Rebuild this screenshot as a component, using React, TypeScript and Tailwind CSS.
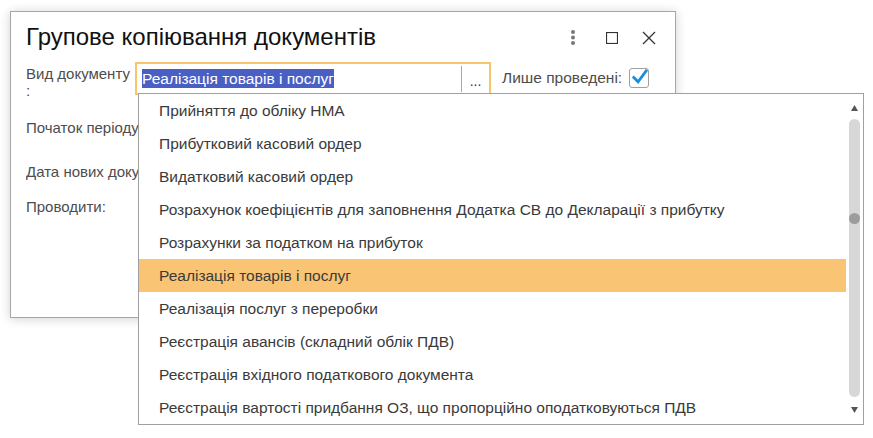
import React from "react";

const items = [
  "Прийняття до обліку НМА",
  "Прибутковий касовий ордер",
  "Видатковий касовий ордер",
  "Розрахунок коефіцієнтів для заповнення Додатка СВ до Декларації з прибутку",
  "Розрахунки за податком на прибуток",
  "Реалізація товарів і послуг",
  "Реалізація послуг з переробки",
  "Реєстрація авансів (складний облік ПДВ)",
  "Реєстрація вхідного податкового документа",
  "Реєстрація вартості придбання ОЗ, що пропорційно оподатковуються ПДВ",
];

export default function App() {
  return (
    <div
      className="relative w-[873px] h-[438px] bg-white overflow-hidden"
      style={{ fontFamily: '"Liberation Sans", Arial, sans-serif' }}
    >
      <div className="absolute left-0 top-0 w-[873px] h-[438px]">
        <div className="ml-[10px] mt-[11px] w-[666px] h-[307px] border border-[#a6a6a6] bg-white shadow-[0_1px_10px_rgba(0,0,0,0.18)] flex flex-col">
          <div className="flex items-start pt-[11px] pl-[15px] pr-[19px]">
            <div className="text-[24px] leading-[28px] text-[#111] flex-1">
              Групове копіювання документів
            </div>
            <div className="flex items-center pt-[7px]">
              <svg width="6" height="15" viewBox="0 0 6 15">
                <circle cx="3" cy="2" r="2" fill="#777" />
                <circle cx="3" cy="7.5" r="2" fill="#777" />
                <circle cx="3" cy="13" r="2" fill="#777" />
              </svg>
              <svg width="12" height="12" viewBox="0 0 12 12" className="ml-[30px]">
                <rect x="0.5" y="0.5" width="11" height="11" fill="none" stroke="#333" strokeWidth="1.2" />
              </svg>
              <svg width="14" height="14" viewBox="0 0 14 14" className="ml-[24px]">
                <path d="M1 1 L13 13 M13 1 L1 13" stroke="#333" strokeWidth="1.3" />
              </svg>
            </div>
          </div>
          <div className="flex mt-[11px] pl-[15px]">
            <div className="w-[109px] shrink-0 text-[15px] leading-[17px] text-[#4d4d4d] pt-[3px] whitespace-nowrap">
              Вид документу
              <br />:
            </div>
            <div className="w-[356px] h-[33px] border-2 border-[#f8c46c] flex items-center">
              <div className="flex-1 pl-[5px]">
                <span className="bg-[#4a5fc4] text-white text-[15.5px] leading-[19px] inline-block">
                  Реалізація товарів і послуг
                </span>
              </div>
              <div className="w-[1px] h-[26px] bg-[#a8a8a8]" />
              <div className="w-[27px] text-center text-[14px] text-[#333] leading-[14px] pt-[4px]">
                ...
              </div>
            </div>
            <div className="ml-[11px] flex items-center h-[33px] pb-[1px]">
              <span className="text-[15.5px] text-[#4d4d4d]">Лише проведені:</span>
              <div className="ml-[7px] w-[20px] h-[20px] border border-[#a0a0a0] rounded-[3px] bg-white flex items-center justify-center">
                <svg width="18" height="18" viewBox="0 0 18 18" className="-mt-[3px] ml-[1px]">
                  <path d="M3 9.5 L7.5 14 L16 2.5" fill="none" stroke="#1b8edb" strokeWidth="3" strokeLinecap="square" />
                </svg>
              </div>
            </div>
          </div>
          <div className="ml-[15px] w-[112px] overflow-hidden mt-[20px] text-[15px] leading-[17px] text-[#4d4d4d] whitespace-nowrap">Початок періоду:</div>
          <div className="ml-[15px] w-[112px] overflow-hidden mt-[27px] text-[15px] leading-[17px] text-[#4d4d4d] whitespace-nowrap">Дата нових документів:</div>
          <div className="ml-[15px] mt-[18px] text-[15px] leading-[17px] text-[#4d4d4d] whitespace-nowrap">Проводити:</div>
        </div>
      </div>

      <div className="absolute left-[138px] top-[93px] w-[726px] h-[332px] border border-[#a0a0a0] bg-white flex">
        <div className="w-[707px] flex flex-col">
          {items.map((t, i) => (
            <div
              key={i}
              className={
                "h-[33px] flex items-center pl-[20px] text-[15.5px] text-[#3a3a3a] whitespace-nowrap " +
                (i === 5 ? "bg-[#f9c575]" : "")
              }
            >
              {t}
            </div>
          ))}
        </div>
        <div className="flex-1 flex flex-col items-center pt-[11px] pb-[11px]">
          <svg width="7" height="6" viewBox="0 0 7 6">
            <path d="M3.5 0 L7 6 L0 6 Z" fill="#555" />
          </svg>
          <div className="mt-[8px] w-[11px] flex-1 rounded-full bg-[#d7d7d7] relative">
            <div className="absolute left-0 top-[94px] w-[11px] h-[11px] rounded-full bg-[#9c9c9c]" />
          </div>
          <svg width="7" height="6" viewBox="0 0 7 6" className="mt-[10px]">
            <path d="M0 0 L7 0 L3.5 6 Z" fill="#555" />
          </svg>
        </div>
      </div>
    </div>
  );
}
